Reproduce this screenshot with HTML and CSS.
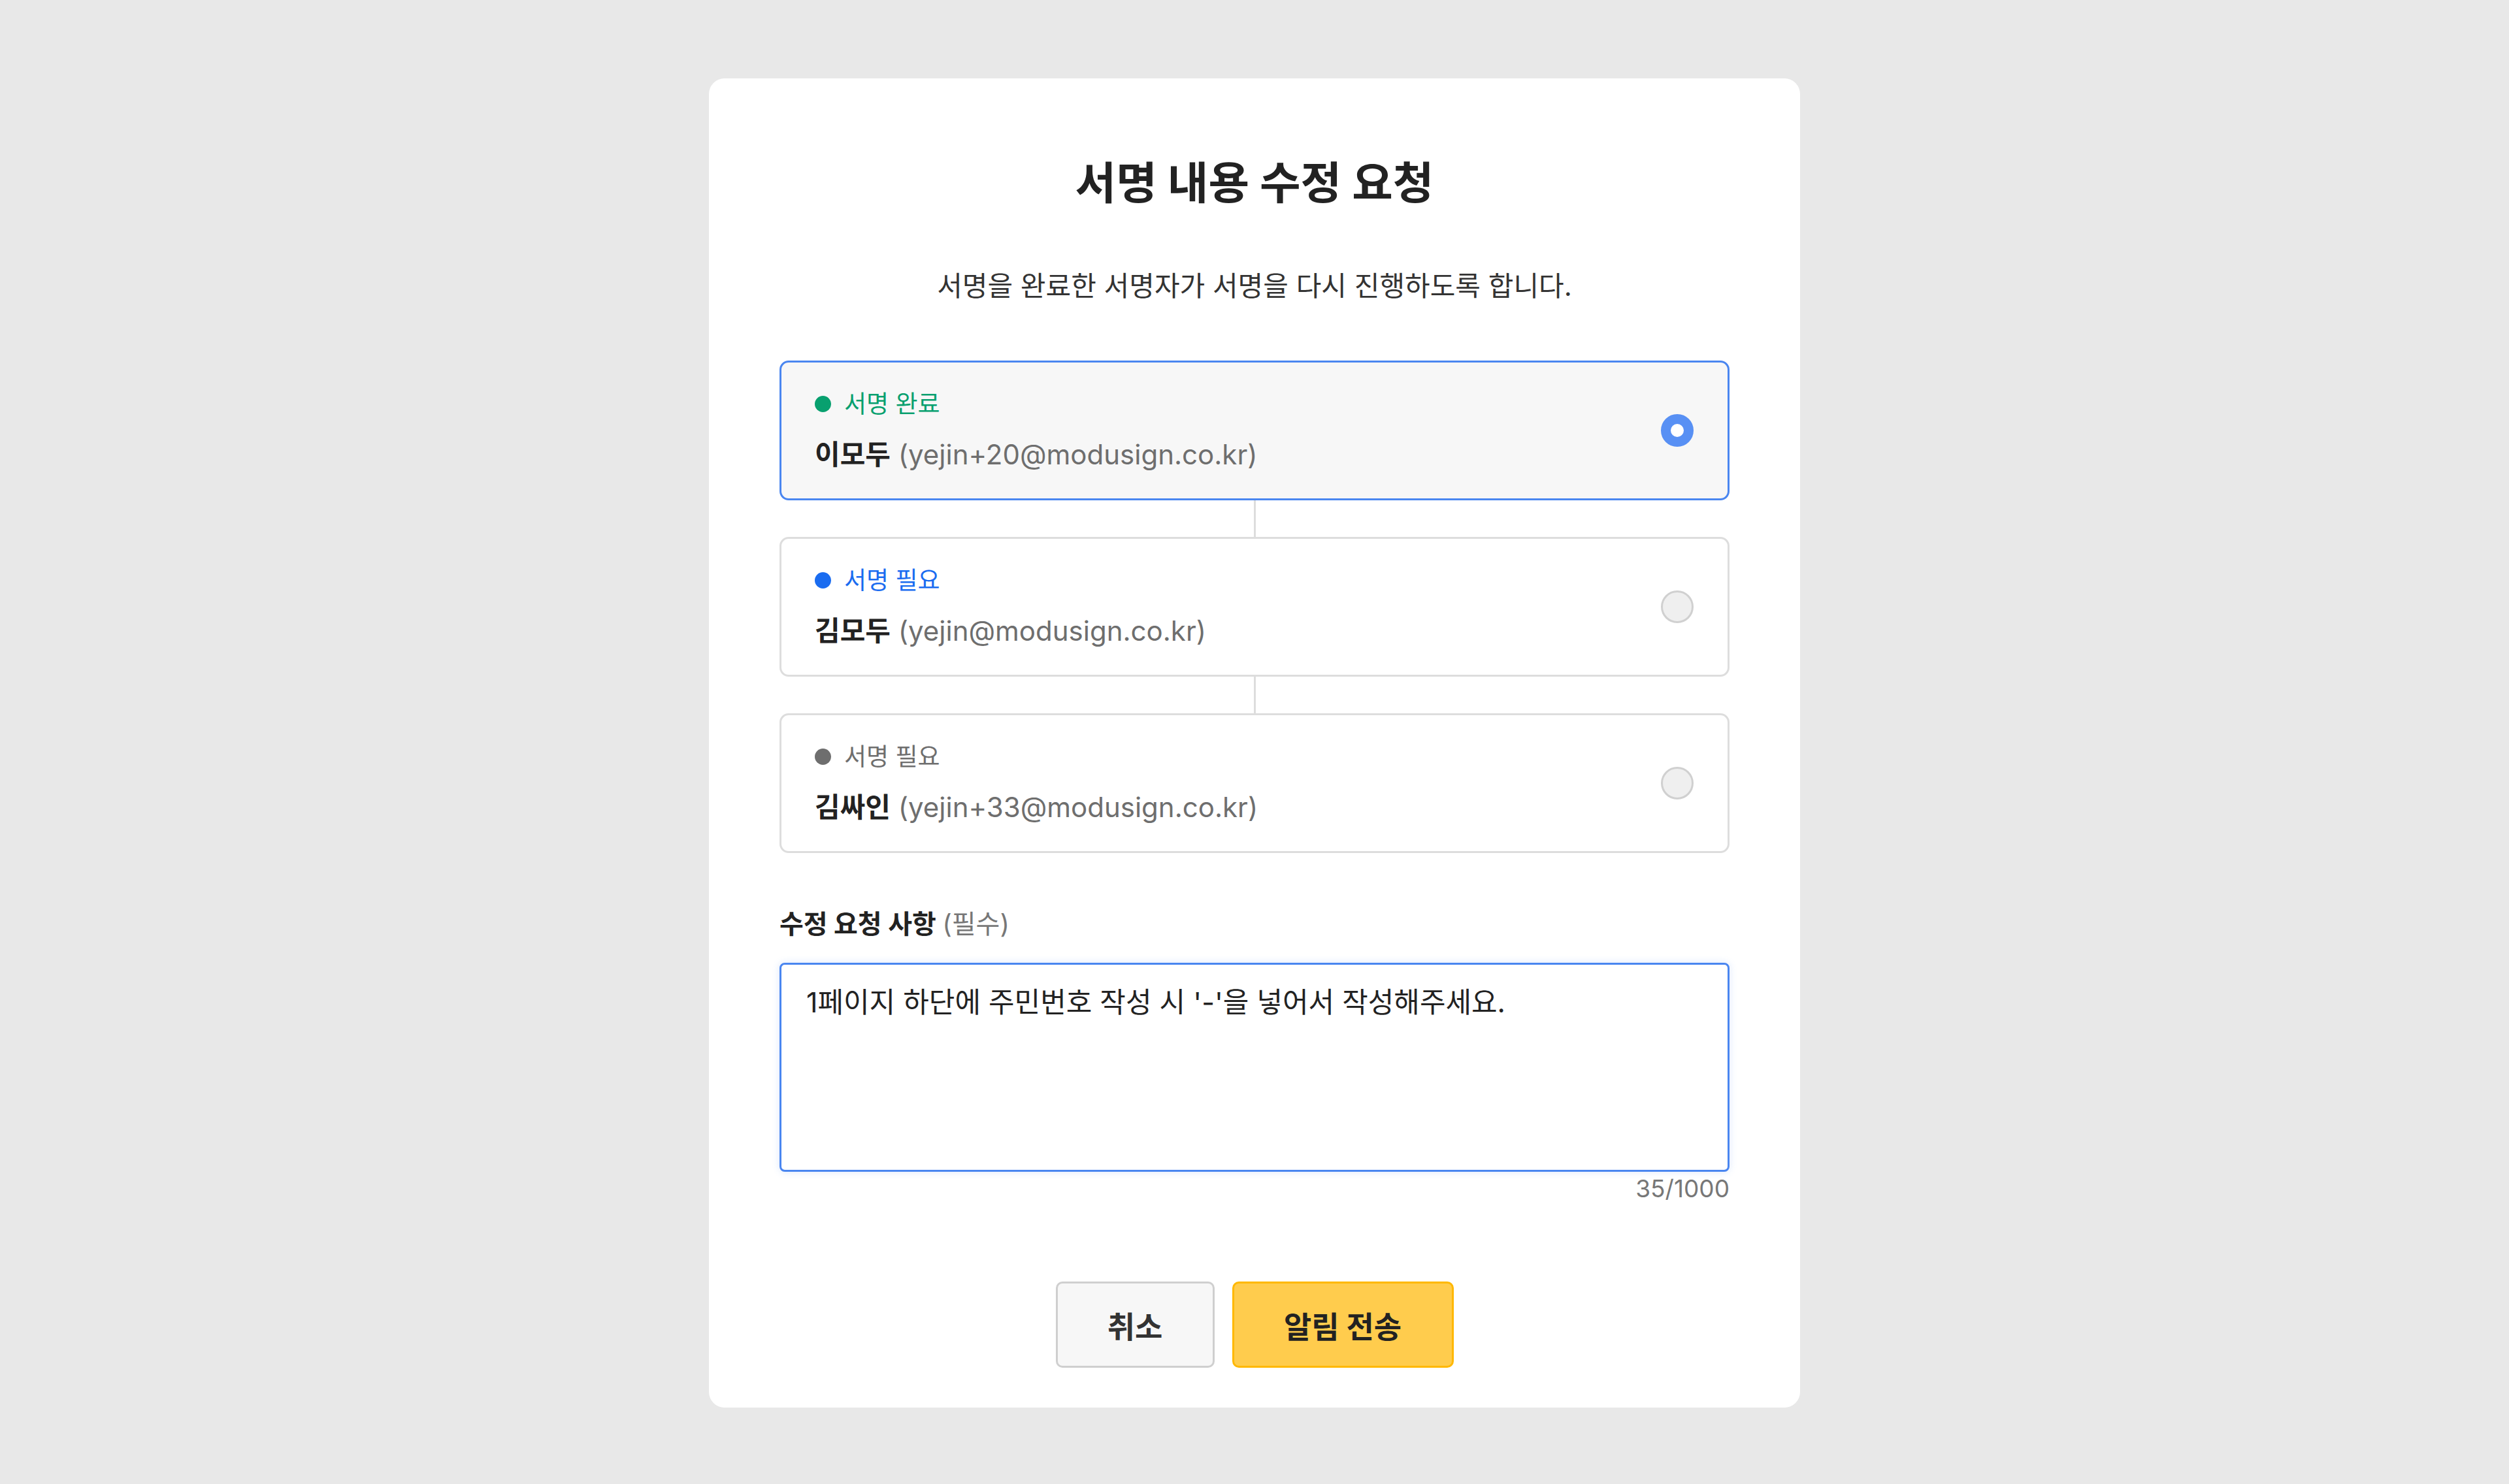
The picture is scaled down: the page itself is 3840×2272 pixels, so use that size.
FILE: index.html
```html
<!DOCTYPE html>
<html lang="ko">
<head>
    <meta charset="UTF-8">
    <meta name="viewport" content="width=device-width, initial-scale=1.0">
    <title>서명 내용 수정 요청</title>
    <link rel="stylesheet" href="styles.css">
</head>
<body>
    <div class="modal">
        <h1 class="title">서명 내용 수정 요청</h1>
        <p class="desc">서명을 완료한 서명자가 서명을 다시 진행하도록 합니다.</p>

        <!-- signer list, joined by short vertical links -->
        <div class="signers">
            <div class="signer selected">
                <div class="signer-info">
                    <div class="status done"><span class="dot"></span>서명 완료</div>
                    <div class="person"><b>이모두</b> <span class="email">(yejin+20@modusign.co.kr)</span></div>
                </div>
                <span class="radio checked"></span>
            </div>
            <div class="link"></div>
            <div class="signer">
                <div class="signer-info">
                    <div class="status current"><span class="dot"></span>서명 필요</div>
                    <div class="person"><b>김모두</b> <span class="email">(yejin@modusign.co.kr)</span></div>
                </div>
                <span class="radio"></span>
            </div>
            <div class="link"></div>
            <div class="signer">
                <div class="signer-info">
                    <div class="status waiting"><span class="dot"></span>서명 필요</div>
                    <div class="person"><b>김싸인</b> <span class="email">(yejin+33@modusign.co.kr)</span></div>
                </div>
                <span class="radio"></span>
            </div>
        </div>

        <div class="field-label">수정 요청 사항 <span class="optional">(필수)</span></div>
        <textarea class="request" maxlength="1000">1페이지 하단에 주민번호 작성 시 '-'을 넣어서 작성해주세요.</textarea>
        <div class="counter">35/1000</div>

        <div class="actions">
            <button type="button" class="btn btn-cancel">취소</button>
            <button type="button" class="btn btn-send">알림 전송</button>
        </div>
    </div>
</body>
</html>
```

FILE: styles.css
```css
body {
    margin: 0;
    padding-top: 120px;
    min-height: 100vh;
    box-sizing: border-box;
    display: flex;
    justify-content: center;
    align-items: flex-start;
    background-color: #e8e8e8;
    font-family: Inter, "Noto Sans CJK KR", sans-serif;
    color: #222;
}
.modal {
    width: 1670px;
    box-sizing: border-box;
    padding: 115px 108px 61px;
    background-color: #fff;
    border-radius: 24px;
}
.title {
    margin: 0;
    font-size: 68px;
    line-height: 90px;
    font-weight: 700;
    text-align: center;
    color: #222;
}
.desc {
    margin: 86px 0 0;
    font-size: 42px;
    line-height: 54px;
    text-align: center;
    color: #333;
}
.signers {
    margin-top: 87px;
}
.signer {
    display: flex;
    align-items: center;
    height: 214px;
    box-sizing: border-box;
    padding: 0 52px 0 51px;
    border: 3px solid #ddd;
    border-radius: 14px;
    background-color: #fff;
}
.signer.selected {
    border-color: #4a86f0;
    background-color: #f7f7f7;
}
.signer-info {
    flex: 1;
}
.status {
    display: flex;
    align-items: center;
    gap: 20px;
    font-size: 37px;
    line-height: 48px;
}
.status .dot {
    width: 25px;
    height: 25px;
    border-radius: 50%;
    background-color: currentColor;
}
.status.done {
    color: #08a06f;
}
.status.current {
    color: #1a6cf0;
}
.status.waiting {
    color: #6e6e6e;
}
.person {
    margin-top: 25px;
    font-size: 42px;
    line-height: 56px;
    color: #222;
}
.person b {
    font-weight: 700;
}
.email {
    color: #6e6e6e;
}
.radio {
    width: 50px;
    height: 50px;
    box-sizing: border-box;
    border: 3px solid #d0d0d0;
    border-radius: 50%;
    background-color: #efefef;
}
.radio.checked {
    border: 15px solid #5890f4;
    background-color: #fff;
}
.link {
    width: 3px;
    height: 56px;
    margin: 0 auto;
    background-color: #ddd;
}
.field-label {
    margin-top: 82px;
    font-size: 40px;
    line-height: 54px;
    font-weight: 700;
    color: #222;
}
.field-label .optional {
    font-weight: 400;
    color: #777;
}
.request {
    display: block;
    width: 100%;
    height: 320px;
    margin-top: 32px;
    box-sizing: border-box;
    padding: 28px 38px;
    border: 3px solid #4a86f0;
    border-radius: 8px;
    box-shadow: 0 0 12px rgba(74, 134, 240, 0.2);
    outline: none;
    resize: none;
    font-family: inherit;
    font-size: 43px;
    line-height: 58px;
    color: #222;
}
.counter {
    margin-top: 2px;
    text-align: right;
    font-size: 37px;
    line-height: 48px;
    color: #777;
}
.actions {
    display: flex;
    justify-content: center;
    gap: 27px;
    margin-top: 118px;
}
.btn {
    height: 132px;
    box-sizing: border-box;
    border: 3px solid;
    border-radius: 10px;
    font-family: inherit;
    font-size: 46px;
    font-weight: 700;
    cursor: pointer;
}
.btn-cancel {
    width: 243px;
    background-color: #f7f7f7;
    border-color: #cfcfcf;
    color: #333;
}
.btn-send {
    width: 339px;
    background-color: #ffcc4d;
    border-color: #ffb800;
    color: #222;
}
```
